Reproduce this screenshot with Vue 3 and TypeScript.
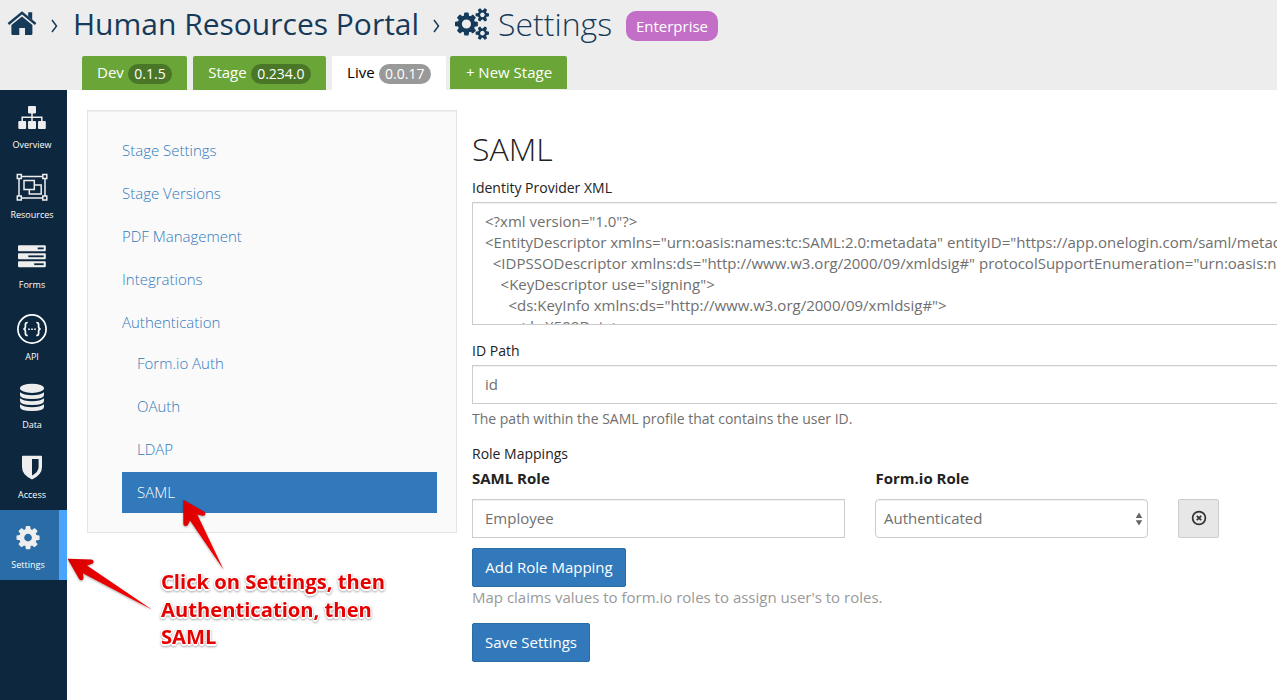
<script setup lang="ts">
interface NavItem { id: string; label: string; active?: boolean }
interface Stage { name: string; version: string; current?: boolean }
interface SettingsLink { label: string; sub?: boolean; active?: boolean }

const nav: NavItem[] = [
  { id: 'overview', label: 'Overview' },
  { id: 'resources', label: 'Resources' },
  { id: 'forms', label: 'Forms' },
  { id: 'api', label: 'API' },
  { id: 'data', label: 'Data' },
  { id: 'access', label: 'Access' },
  { id: 'settings', label: 'Settings', active: true },
]
const stages: Stage[] = [
  { name: 'Dev', version: '0.1.5' },
  { name: 'Stage', version: '0.234.0' },
  { name: 'Live', version: '0.0.17', current: true },
]
const links: SettingsLink[] = [
  { label: 'Stage Settings' },
  { label: 'Stage Versions' },
  { label: 'PDF Management' },
  { label: 'Integrations' },
  { label: 'Authentication' },
  { label: 'Form.io Auth', sub: true },
  { label: 'OAuth', sub: true },
  { label: 'LDAP', sub: true },
  { label: 'SAML', sub: true, active: true },
]
const xml = [
  '<?xml version="1.0"?>',
  '<EntityDescriptor xmlns="urn:oasis:names:tc:SAML:2.0:metadata" entityID="https://app.onelogin.com/saml/metadata/',
  '  <IDPSSODescriptor xmlns:ds="http://www.w3.org/2000/09/xmldsig#" protocolSupportEnumeration="urn:oasis:names:tc',
  '    <KeyDescriptor use="signing">',
  '      <ds:KeyInfo xmlns:ds="http://www.w3.org/2000/09/xmldsig#">',
  '        <ds:X509Data>',
].join('\n')
</script>

<template>
  <div class="app">
    <header class="header">
      <div class="crumbs">
        <svg class="home" width="30" height="26" viewBox="0 0 30 26">
          <path d="M1.4 13 15 1.800 28.600 13" class="roof" />
          <path d="M21.2 1.2h4v7.6l-4-3.3z" />
          <path d="M15 5.6 25.4 14v8.8q0 1.2-1.2 1.2h-6.2v-7h-5.7v7H5.600q-1.200 0-1.200-1.200V14z" />
        </svg>
        <svg class="chev chev-a" width="7" height="14" viewBox="0 0 7 14"><path d="M1 1 5.500 7 1 13" /></svg>
        <span class="portal">Human Resources Portal</span>
        <svg class="chev chev-b" width="7" height="14" viewBox="0 0 7 14"><path d="M1 1 5.500 7 1 13" /></svg>
        <svg class="cogs" width="34.300" height="32" viewBox="0 0 1920 1792">
          <path d="M896 896q0-106-75-181t-181-75-181 75-75 181 75 181 181 75 181-75 75-181zm768 512q0-52-38-90t-90-38-90 38-38 90q0 53 37.5 90.5t90.5 37.5 90.5-37.5 37.5-90.5zm0-1024q0-52-38-90t-90-38-90 38-38 90q0 53 37.5 90.5t90.5 37.5 90.5-37.5 37.5-90.5zm-384 421v185q0 10-7 19.5t-16 10.5l-155 24q-11 35-32 76 34 48 90 115 7 11 7 20 0 12-7 19-23 30-82.5 89.5t-78.5 59.5q-11 0-21-7l-115-90q-37 19-77 31-11 108-23 155-7 24-30 24h-186q-11 0-20-7.5t-10-17.5l-23-153q-34-10-75-31l-118 89q-7 7-20 7-11 0-21-8-144-133-144-160 0-9 7-19 10-14 41-53t47-61q-23-44-35-82l-152-24q-10-1-17-9.500t-7-19.500v-185q0-10 7-19.500t16-10.500l155-24q11-35 32-76-34-48-90-115-7-11-7-20 0-12 7-20 22-30 82-89t79-59q11 0 21 7l115 90q34-18 77-32 11-108 23-154 7-24 30-24h186q11 0 20 7.500t10 17.500l23 153q34 10 75 31l118-89q8-7 20-7 11 0 21 8 144 133 144 160 0 8-7 19-12 16-42 54t-45 60q23 48 34 82l152 23q10 2 17 10.500t7 19.500zm640 533v140q0 16-149 31-12 27-30 52 51 113 51 138 0 4-4 7-122 71-124 71-8 0-46-47t-52-68q-20 2-30 2t-30-2q-14 21-52 68t-46 47q-2 0-124-71-4-3-4-7 0-25 51-138-18-25-30-52-149-15-149-31v-140q0-16 149-31 13-29 30-52-51-113-51-138 0-4 4-7 4-2 35-20t59-34 30-16q8 0 46 46.500t52 67.500q20-2 30-2t30 2q51-71 92-112l6-2q4 0 124 70 4 3 4 7 0 25-51 138 17 23 30 52 149 15 149 31zm0-1024v140q0 16-149 31-12 27-30 52 51 113 51 138 0 4-4 7-122 71-124 71-8 0-46-47t-52-68q-20 2-30 2t-30-2q-14 21-52 68t-46 47q-2 0-124-71-4-3-4-7 0-25 51-138-18-25-30-52-149-15-149-31v-140q0-16 149-31 13-29 30-52-51-113-51-138 0-4 4-7 4-2 35-20t59-34 30-16q8 0 46 46.500t52 67.500q20-2 30-2t30 2q51-71 92-112l6-2q4 0 124 70 4 3 4 7 0 25-51 138 17 23 30 52 149 15 149 31z" />
        </svg>
        <span class="page">Settings</span>
        <span class="plan">Enterprise</span>
      </div>
      <div class="tabs">
        <div v-for="s in stages" :key="s.name" class="tab" :class="{ current: s.current }">
          <span class="tab-name">{{ s.name }}</span><span class="version">{{ s.version }}</span>
        </div>
        <div class="tab new-stage">+ New Stage</div>
      </div>
    </header>

    <div class="body">
      <nav class="sidebar">
        <div v-for="n in nav" :key="n.id" class="nav-item" :class="[n.id, { active: n.active }]">
          <svg width="56" height="46" viewBox="-28 0 56 46">
            <g v-if="n.id === 'overview'">
              <rect x="-4" y="16" width="8" height="7.500" rx="1" />
              <rect x="-13.700" y="31" width="7.800" height="8" rx="1" />
              <rect x="-4" y="31" width="8" height="8" rx="1" />
              <rect x="6" y="31" width="7.800" height="8" rx="1" />
              <path class="line" d="M0 23v8M-9.800 31v-3.700H9.800V31" />
            </g>
            <g v-else-if="n.id === 'resources'" class="line">
              <path d="M-13 16.500H13V38H-13z" />
              <path d="M2.500 24.900H9.200V34.100H-2.700V29.700" />
              <path d="M-8 20.500H2.300V29.500H-8z" />
              <g class="handle">
                <rect x="-14.700" y="14.500" width="4" height="4" />
                <rect x="10.800" y="14.500" width="4" height="4" />
                <rect x="-14.700" y="36" width="4" height="4" />
                <rect x="10.800" y="36" width="4" height="4" />
              </g>
            </g>
            <g v-else-if="n.id === 'forms'">
              <rect x="-14" y="15.300" width="27.800" height="6" rx="1" />
              <rect x="-14" y="23.200" width="27.800" height="6" rx="1" />
              <rect x="-14" y="31.200" width="27.800" height="6" rx="1" />
              <rect class="slot" x="5.700" y="17.500" width="6" height="1.800" />
              <rect class="slot" x="-3.700" y="25.400" width="15.400" height="1.800" />
              <rect class="slot" x="2.200" y="33.300" width="9.500" height="1.800" />
            </g>
            <g v-else-if="n.id === 'api'" class="line api-mark">
              <circle cx="0" cy="29" r="14.100" />
              <path d="M-4.300 22.500q-2.300 0-2.300 2v2.300q0 2-2 2.200q2 .2 2 2.200v2.300q0 2 2.300 2M4.300 22.500q2.300 0 2.300 2v2.300q0 2 2 2.200q-2 .2-2 2.200v2.300q0 2-2.300 2" />
              <path class="dots" d="M-3.800 29.200h1.600M-.8 29.200h1.600M2.200 29.200h1.600" />
            </g>
            <g v-else-if="n.id === 'data'">
              <ellipse cx="0" cy="18.300" rx="12" ry="4.600" />
              <path d="M-12 22.200q3.500 3 12 3t12-3v2.700q0 4-12 4t-12-4z" />
              <path d="M-12 28.200q3.500 3 12 3t12-3v2.700q0 4-12 4t-12-4z" />
              <path d="M-12 34.200q3.500 3 12 3t12-3v2.700q0 4-12 4t-12-4z" />
            </g>
            <g v-else-if="n.id === 'access'">
              <path fill-rule="evenodd" d="M-9 15.700H9q1 0 1 1V27q0 8-10 12.400Q-10 35-10 27V16.700q0-1 1-1zM0 19V35.500Q6.600 32 6.600 27V19z" />
            </g>
            <g v-else transform="translate(-13.400 14.200) scale(.015)">
              <path d="M1152 896q0-106-75-181t-181-75-181 75-75 181 75 181 181 75 181-75 75-181zm512-109v222q0 12-8 23t-20 13l-185 28q-19 54-39 91 35 50 107 138 10 12 10 25t-9 23q-27 37-99 108t-94 71q-12 0-26-9l-138-108q-44 23-91 38-16 136-29 186-7 28-36 28h-222q-14 0-24.500-8.500t-11.500-21.500l-28-184q-49-16-90-37l-141 107q-10 9-25 9-14 0-25-11-126-114-165-168-7-10-7-23 0-12 8-23 15-21 51-66.500t54-70.500q-27-50-41-99l-183-27q-13-2-21-12.500t-8-23.500v-222q0-12 8-23t19-13l186-28q14-46 39-92-40-57-107-138-10-12-10-24 0-10 9-23 26-36 98.500-107.500t94.500-71.500q13 0 26 10l138 107q44-23 91-38 16-136 29-186 7-28 36-28h222q14 0 24.500 8.500t11.500 21.500l28 184q49 16 90 37l142-107q9-9 24-9 13 0 25 10 129 119 165 170 7 8 7 22 0 12-8 23-15 21-51 66.500t-54 70.500q26 50 41 98l183 28q13 2 21 12.500t8 23.500z" />
            </g>
          </svg>
          <span>{{ n.label }}</span>
        </div>
      </nav>

      <aside class="well">
        <a v-for="l in links" :key="l.label" class="link" :class="{ sub: l.sub, active: l.active }">{{ l.label }}</a>
      </aside>

      <main class="main">
        <h2>SAML</h2>
        <label class="label">Identity Provider XML</label>
        <div class="field xml">{{ xml }}</div>
        <label class="label id-label">ID Path</label>
        <div class="field single">id</div>
        <p class="help">The path within the SAML profile that contains the user ID.</p>
        <label class="label roles-label">Role Mappings</label>
        <div class="row heads">
          <strong class="col-a">SAML Role</strong>
          <strong>Form.io Role</strong>
        </div>
        <div class="row">
          <div class="field single employee">Employee</div>
          <div class="field single select">
            <span>Authenticated</span>
            <svg width="8" height="14" viewBox="0 0 8 14"><path d="M4 .5 7.300 6H.7zM4 13.500.7 8.200h6.600z" /></svg>
          </div>
          <button class="remove">
            <svg width="16" height="16" viewBox="0 0 16 16"><circle cx="8" cy="8" r="6.400" /><path d="m5.800 5.800 4.400 4.400m0-4.400-4.400 4.400" /></svg>
          </button>
        </div>
        <button class="btn add">Add Role Mapping</button>
        <p class="hint">Map claims values to form.io roles to assign user's to roles.</p>
        <button class="btn save">Save Settings</button>
      </main>
    </div>

    <div class="callout">
      <svg width="170" height="125" viewBox="60 495 170 125">
        <defs>
          <linearGradient id="red" x1="0" y1="0" x2="1" y2="1">
            <stop offset="0" stop-color="#d90000" /><stop offset="1" stop-color="#ff0000" />
          </linearGradient>
        </defs>
        <path d="M183.300 499.700 204 511.600Q206.200 513.200 205 515Q204 516.300 201.500 515.500L197.300 514.500 223.600 569.700 190 520.500 188 524.700Q187 526.500 185 526Q183.300 525.500 183.300 523.500Z" />
        <path d="M67.500 558.700 91.500 559.600Q93.700 560 93.600 562Q93.300 564 91.200 564L87 565.500 152.200 609.800 82.800 573.200 83.500 577.500Q83.500 580 81.700 580.300Q80 580.500 79 578.700Z" />
      </svg>
      <div class="note">Click on Settings, then<br>Authentication, then<br>SAML</div>
    </div>
  </div>
</template>

<style>
html, body { margin: 0; overflow: hidden; }
</style>

<style scoped>
* { box-sizing: border-box; }
.app {
  position: relative; width: 1277px; height: 700px; overflow: hidden; background: #fff;
  font-family: "Open Sans", "Noto Sans", sans-serif; font-size: 15px; line-height: 21px; color: #222;
  white-space: nowrap;
}
.header { height: 90px; background: #ededed; color: #163a5a; display: flex; flex-direction: column; }
.crumbs { height: 56px; display: flex; align-items: flex-start; padding-left: 7px; }
.home { margin-top: 11px; fill: #163a5a; }
.roof { fill: none; stroke: #163a5a; stroke-width: 2.400; }
.chev { fill: none; stroke: #163a5a; stroke-width: 1.500; margin-top: 19px; }
.chev-a { margin-left: 14px; }
.portal { margin-left: 15px; width: 347px; font-size: 30px; line-height: 48px; }
.chev-b { margin-left: 13px; }
.cogs { fill: #163a5a; margin: 7.500px 0 0 15px; }
.page { margin-left: 8.700px; width: 115px; font-size: 32px; font-weight: 300; line-height: 47px; }
.plan {
  margin: 11px 0 0 13px; width: 92px; height: 30px; border-radius: 10px; background: #c36fc7;
  color: #fff; text-align: center; font-size: 15px; line-height: 30px;
}
.tabs { display: flex; padding-left: 82px; height: 34px; }
.tab {
  height: 34px; padding: 0 15px; display: flex; border-radius: 2px 2px 0 0;
  background: #69a637; color: #fff; font-weight: 500; line-height: 33px; margin-right: 6px;
}
.tab.current { background: #fff; color: #000; font-weight: 400; margin-right: 4px; padding-right: 15.500px; }
.version {
  margin: 8px 0 0 4px; height: 20px; padding: 0 6.500px; border-radius: 10px; font-weight: 400;
  background: #4a7627; line-height: 20px; font-size: 14px;
}
.current .version { background: #999; color: #fff; }
.tab.new-stage { width: 117px; height: 33px; margin: 0; padding: 0; justify-content: center; }

.body { display: flex; height: 610px; }
.sidebar { width: 67px; background: #0c273e; flex: none; }
.nav-item {
  height: 70px; padding-right: 3px; display: flex; flex-direction: column; align-items: center;
  color: #fff; font-size: 9px; line-height: 18px;
}
.nav-item svg { fill: #eee; flex: none; }
.nav-item.api span { margin-top: 2px; }
.nav-item.active { background: #2a6ca5; border-right: 8px solid #49a5fb; }
.line { fill: none; stroke: #eee; stroke-width: 1.500; }
.handle rect { fill: #0c273e; }
.slot { fill: #0c273e; }
.api-mark { stroke: #fff; stroke-width: 1.700; }
.dots { stroke-width: 1.600; }

.well {
  width: 370px; height: 423px; margin: 20px 0 0 20px; padding: 19px 19px 0 34px; flex: none;
  background: #fafafa; border: 1px solid #e5e5e5; box-shadow: inset 0 1px 1px rgba(0,0,0,.05);
  display: flex; flex-direction: column; gap: 2px;
}
.link { height: 41px; line-height: 41px; color: #3179bb; font-weight: 300; }
.link.sub { padding-left: 15px; position: relative; top: -2px; }
.link.active { background: #3179bb; color: #fff; }

.main { flex: none; width: 830px; margin-left: 15px; padding-top: 38px; display: flex; flex-direction: column; align-items: flex-start; }
h2 { margin: 0; font-size: 32px; line-height: 42px; font-weight: 300; height: 49px; }
.label { font-size: 14px; line-height: 21px; }
.field { border: 1px solid #ccc; color: #6f6f6f; background: #fff; box-shadow: inset 0 1px 1px rgba(0,0,0,.06); }
.xml { margin-top: 4px; width: 830px; height: 123px; padding: 8px 12px; white-space: pre; overflow: hidden; }
.id-label { margin-top: 15px; }
.single { width: 830px; height: 39px; padding: 0 12px; line-height: 37px; }
.id-label + .single { margin-top: 4px; }
.help { margin: 4px 0 0; font-size: 14px; color: #6f6f6f; }
.roles-label { margin-top: 14px; }
.row { display: flex; }
.heads { margin: 4px 0 10px; }
.col-a { width: 403.500px; }
.employee { width: 373px; }
.select { width: 273px; margin-left: 30px; padding: 0 4px 0 8px; border-radius: 4px; display: flex; justify-content: space-between; align-items: center; }
.select svg { fill: #666; }
.remove {
  width: 41px; height: 39px; margin-left: 30px; padding: 0 0 2px; border: 1px solid #ccc; border-radius: 2px;
  background: #e7e7e7; display: flex; align-items: center; justify-content: center;
}
.remove svg { fill: none; stroke: #333; stroke-width: 1.700; }
.btn {
  height: 39px; padding: 0 12px; border: 1px solid #2a6ca5; border-radius: 2px; background: #3179bb; color: #fff;
  font: 15px/37px "Open Sans", "Noto Sans", sans-serif;
}
.add { width: 154px; margin-top: 10px; }
.hint { margin: 0; color: #999; }
.save { margin-top: 15px; }

.callout { position: absolute; left: 60px; top: 495px; filter: drop-shadow(0 1px 1px rgba(0,0,0,.35)); }
.callout svg { display: block; fill: url(#red); }
.note {
  position: absolute; left: 101px; top: 73px; color: #e60000; font-size: 20.200px; font-weight: 700; line-height: 27.500px;
  text-shadow: 1px 1px 0 #fff, -1px -1px 0 #fff, 1px -1px 0 #fff, -1px 1px 0 #fff, 0 2px 0 #fff;
}
</style>
